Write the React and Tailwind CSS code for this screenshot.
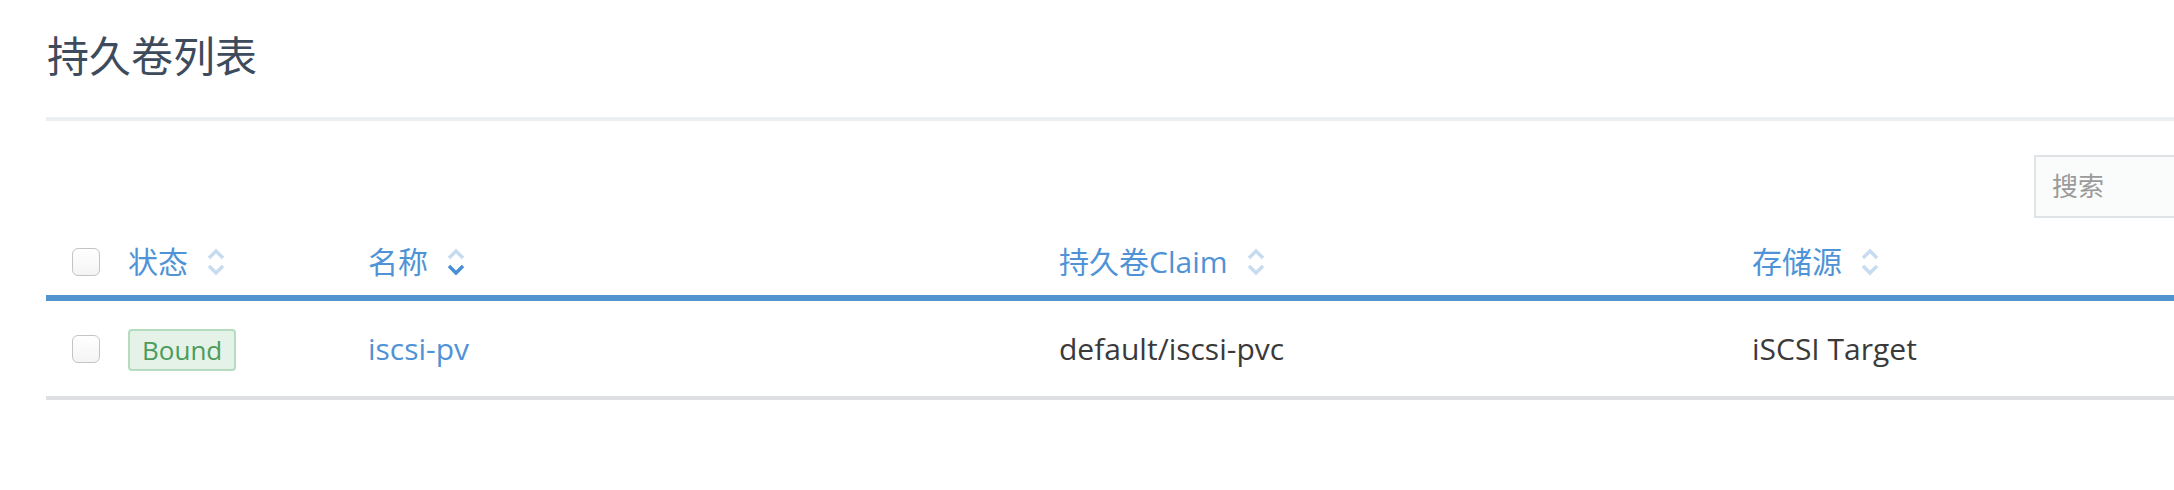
import React from "react";

const FONT = {
  fontFamily: '"Open Sans", "Noto Sans CJK SC", sans-serif',
};

// 排序图标：上下两个箭头，active 为高亮方向
function SortIcon({ active }) {
  const light = "#c7dcf0";
  const dark = "#4a8fd6";
  return (
    <svg width="20" height="32" viewBox="0 0 20 32" className="ml-[18px] shrink-0">
      <polyline
        points="3,12 10,5 17,12"
        fill="none"
        stroke={active === "up" ? dark : light}
        strokeWidth="3.5"
      />
      <polyline
        points="3,20 10,27 17,20"
        fill="none"
        stroke={active === "down" ? dark : light}
        strokeWidth="3.5"
      />
    </svg>
  );
}

function Checkbox() {
  return (
    <span className="block w-[28px] h-[28px] rounded-[6px] border-[1.5px] border-[#c4c4c4] bg-gradient-to-b from-white to-[#f4f4f4]" />
  );
}

function HeaderCell({ label, sort, className }) {
  return (
    <div className={"flex items-center " + className}>
      <span className="text-[30px] leading-none text-[#4f93d6]">{label}</span>
      <SortIcon active={sort} />
    </div>
  );
}

export default function App() {
  return (
    <div className="w-full min-h-[490px] bg-white overflow-hidden" style={FONT}>
      <div className="pl-[46px]">
        {/* 标题 */}
        <h1 className="pt-[35px] pl-[1px] text-[42px] leading-[42px] font-normal text-[#3d4b5c]">
          持久卷列表
        </h1>
        <div className="mt-[40px] h-[4px] bg-[#eceff1]" />

        {/* 搜索 */}
        <div className="mt-[34px] flex justify-end">
          <div className="w-[300px] -mr-[160px] h-[63px] border-2 border-[#dfe3e6] bg-[#fafbfb] flex items-center pl-[16px]">
            <span className="text-[26px] text-[#9a9a9a]">搜索</span>
          </div>
        </div>

        {/* 表头 */}
        <div className="mt-[10px] h-[67px] flex items-center border-b-[6px] border-[#5294d0] box-content">
          <div className="w-[82px] pl-[26px] shrink-0">
            <Checkbox />
          </div>
          <HeaderCell label="状态" className="w-[240px] shrink-0" />
          <HeaderCell label="名称" sort="down" className="w-[691px] shrink-0" />
          <HeaderCell label="持久卷Claim" className="w-[693px] shrink-0" />
          <HeaderCell label="存储源" className="flex-1" />
        </div>

        {/* 数据行 */}
        <div className="h-[95px] flex items-center border-b-4 border-[#dddfe2] box-content text-[30px] text-[#3a3a3a]">
          <div className="w-[82px] pl-[26px] shrink-0">
            <Checkbox />
          </div>
          <div className="w-[240px] shrink-0">
            <span className="inline-block h-[42px] leading-[38px] px-[12px] rounded-[4px] border-2 border-[#b6dcc0] bg-[#e4f2e7] text-[26px] text-[#4b9c5b]">
              Bound
            </span>
          </div>
          <div className="w-[691px] shrink-0">
            <a className="text-[#4f93d6]">iscsi-pv</a>
          </div>
          <div className="w-[693px] shrink-0">default/iscsi-pvc</div>
          <div className="flex-1">iSCSI Target</div>
        </div>
      </div>
    </div>
  );
}
